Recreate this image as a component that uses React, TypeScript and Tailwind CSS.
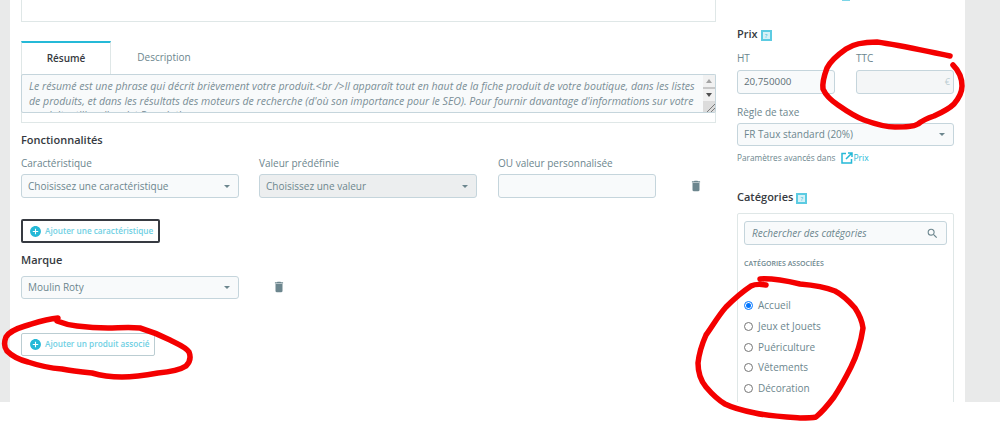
import React from 'react';

const font = "[font-family:'Open_Sans',sans-serif]";

const Select = ({ label, disabled, width, height = 'h-6' }: { label: string; disabled?: boolean; width: string; height?: string }) => (
  <div className={`${width} ${height} shrink-0 flex items-center justify-between pl-[6px] pr-[8px] border border-[#c5d5dc] rounded-[3px] text-[10px] text-[#6c868e] ${disabled ? 'bg-[#eceeef]' : 'bg-[#f8fafb]'}`}>
    <span>{label}</span>
    <span className="w-0 h-0 border-x-[3.5px] border-x-transparent border-t-[3.5px] border-t-[#6c868e]" />
  </div>
);

const Help = () => (
  <span className="mt-[3px] w-[11px] h-[11px] border-2 border-[#5ccbe2] bg-[#d5f1f7] flex items-center justify-center text-[6px] font-normal leading-none text-[#25b9d7]">?</span>
);

const AddButton = ({ label, focused }: { label: string; focused?: boolean }) => (
  <div className={`inline-flex items-center gap-[3px] rounded-[2px] font-semibold text-[8.2px] text-[#6fcfe3] bg-white ${focused ? 'h-6 pl-[6px] border-2 border-[#363a41] pr-[5px]' : 'h-[23px] pl-[7px] border border-[#bbcdd2] pr-[5px]'}`}>
    <svg width="13" height="13" viewBox="0 0 24 24" fill="#25b9d7">
      <path d="M12 2C6.48 2 2 6.48 2 12s4.48 10 10 10 10-4.48 10-10S17.52 2 12 2zm5 11h-4v4h-2v-4H7v-2h4V7h2v4h4v2z" />
    </svg>
    {label}
  </div>
);

const Trash = () => (
  <svg width="14" height="14" viewBox="0 0 24 24" fill="#6c868e">
    <path d="M6 19c0 1.1.9 2 2 2h8c1.1 0 2-.9 2-2V7H6v12zM19 4h-3.5l-1-1h-5l-1 1H5v2h14V4z" />
  </svg>
);

const Scribble = ({ d }: { d: string }) => (
  <path d={d} fill="none" stroke="#f40000" strokeWidth={5.5} strokeLinecap="round" strokeLinejoin="round" />
);

const categories = ['Accueil', 'Jeux et Jouets', 'Puériculture', 'Vêtements', 'Décoration'];

export default function App() {
  return (
    <div className={`relative h-[422px] w-[1000px] overflow-hidden bg-white ${font}`}>
      <div className="h-[402px] bg-[#e9eaea] pl-[10px] pr-[35px]">
        <div className="h-full bg-white flex pl-[11px] overflow-hidden">
          {/* colonne gauche */}
          <div className="w-[695px] shrink-0">
            <div className="h-[22px] border-x border-b border-[#dfe7e7]" />

            <div className="mt-[19px] flex h-[33px]">
              <div className="w-[90px] border-t-2 border-t-[#25b9d7] border-x border-x-[#dfe7e7] flex items-center justify-center text-[10px] text-[#363a41] font-semibold">
                Résumé
              </div>
              <div className="w-[106px] flex items-center justify-center text-[10px] text-[#6c868e]">Description</div>
            </div>

            <div className="h-[49px] border-x border-b border-[#dfe7e7]">
              <div className="relative h-[39px] -ml-px -mr-px bg-[#f8fafb] border border-[#c5d5dc] rounded-[2px] overflow-hidden pl-[7px] pr-[13px] pt-[4px] text-[10.55px] leading-[14.6px] italic text-[#7a8e96]">
                Le résumé est une phrase qui décrit brièvement votre produit.&lt;br /&gt;Il apparaît tout en haut de la fiche produit de votre boutique, dans les listes de produits, et dans les résultats des moteurs de recherche (d'où son importance pour le SEO). Pour fournir davantage d'informations sur votre produit, utilisez l'onglet Description.
                <div className="absolute right-0 top-0 bottom-0 w-[12px] bg-[#f1f1f1] flex flex-col items-center pt-[4px]">
                  <span className="w-0 h-0 border-x-[3px] border-x-transparent border-b-[4px] border-b-[#a3a3a3]" />
                  <span className="mt-[4px] h-[2px] w-full bg-[#c8c8c8]" />
                  <span className="mt-[4px] w-0 h-0 border-x-[3px] border-x-transparent border-t-[4px] border-t-[#505050]" />
                  <div className="absolute right-0 bottom-0 w-[12px] h-[11px] bg-[#dcdcdc]">
                    <svg className="absolute right-0 bottom-0" width="10" height="10" viewBox="0 0 10 10" stroke="#7a7a7a" strokeWidth="1">
                      <path d="M2 10 10 2M6 10 10 6" />
                    </svg>
                  </div>
                </div>
              </div>
            </div>

            <h3 className="mt-[8px] h-[18px] text-[11px] leading-[18px] font-semibold text-[#363a41]">Fonctionnalités</h3>

            <div className="mt-[7px] flex text-[10px] leading-[15px] text-[#6c868e]">
              <span className="w-[238px]">Caractéristique</span>
              <span className="w-[239px]">Valeur prédéfinie</span>
              <span>OU valeur personnalisée</span>
            </div>
            <div className="mt-[3px] flex items-center">
              <Select label="Choisissez une caractéristique" width="w-[218px]" />
              <div className="w-[20px]" />
              <Select label="Choisissez une valeur" disabled width="w-[218px]" />
              <div className="w-[21px]" />
              <div className="w-[158px] h-6 bg-[#f8fafb] border border-[#c5d5dc] rounded-[3px]" />
              <div className="ml-[33px]"><Trash /></div>
            </div>

            <div className="mt-[21px]"><AddButton label="Ajouter une caractéristique" focused /></div>

            <h3 className="mt-[7px] h-[18px] text-[11px] leading-[18px] font-semibold text-[#363a41]">Marque</h3>
            <div className="mt-[7px] flex items-center">
              <Select label="Moulin Roty" width="w-[218px]" height="h-[23px]" />
              <div className="ml-[33px]"><Trash /></div>
            </div>

            <div className="mt-[34px]"><AddButton label="Ajouter un produit associé" /></div>
          </div>

          {/* colonne droite */}
          <div className="ml-[21px] w-[217px] shrink-0 text-[#6c868e]">
            <div className="h-px ml-[105px] w-[8px] bg-[#7cd5e7]" />
            <div className="mt-[24px] flex items-center gap-[3px] text-[11px] leading-[18px] font-semibold text-[#363a41]">Prix <Help /></div>
            <div className="mt-[8px] flex text-[10px] leading-[15px]">
              <span className="w-[119px]">HT</span>
              <span>TTC</span>
            </div>
            <div className="mt-[4px] flex justify-between">
              <div className="w-[98px] h-6 bg-[#f8fafb] border border-[#c5d5dc] rounded-[3px] pl-[6px] flex items-center text-[9.8px] text-[#5d6f76]">20,750000</div>
              <div className="w-[98px] h-6 bg-[#f4f6f7] border border-[#c5d5dc] rounded-[3px] pr-[3px] flex items-center justify-end text-[9px] text-[#bbcdd2]">€</div>
            </div>
            <div className="mt-[11px] text-[10px] leading-[15px]">Règle de taxe</div>
            <div className="mt-[3px]"><Select label="FR Taux standard (20%)" width="w-[217px]" height="h-[23px]" /></div>
            <div className="mt-[6px] flex items-center text-[8.25px] leading-[12px]">
              Paramètres avancés dans
              <svg className="ml-[6px]" width="12" height="12" viewBox="0 0 12 12" fill="none" stroke="#25b9d7" strokeWidth="1.5">
                <path d="M5 1.5H1v9.5h9.5V7M7 1h4v4M11 1 5 7" />
              </svg>
              <span className="text-[8.5px] text-[#25b9d7]">Prix</span>
            </div>

            <div className="mt-[24px] flex items-center gap-[3px] text-[11px] leading-[18px] font-semibold text-[#363a41]">Catégories <Help /></div>
            <div className="mt-[7px] h-[200px] border border-[#dfe7e7] rounded-[2px] px-[6px] pt-[7px]">
              <div className="h-6 bg-[#f8fafb] border border-[#c5d5dc] rounded-[3px] flex items-center justify-between pl-[7px] pr-[7px] text-[10px] italic text-[#6c868e]">
                Rechercher des catégories
                <svg width="13" height="13" viewBox="0 0 24 24" fill="#6c868e">
                  <path d="M15.5 14h-.79l-.28-.27A6.47 6.47 0 0 0 16 9.5 6.5 6.5 0 1 0 9.5 16c1.61 0 3.09-.59 4.23-1.57l.27.28v.79l5 4.99L20.49 19l-4.99-5zm-6 0C7.01 14 5 11.99 5 9.5S7.01 5 9.5 5 14 7.01 14 9.5 11.99 14 9.5 14z" />
                </svg>
              </div>
              <div className="mt-[14px] text-[7px] leading-[10px] font-semibold uppercase">Catégories associées</div>
              <div className="mt-[29px] flex flex-col gap-[5.75px]">
                {categories.map((c, i) => (
                  <label key={c} className="flex items-center gap-[5px] h-[15px] text-[10px]">
                    <span className={`w-[9px] h-[9px] rounded-full border flex items-center justify-center bg-white ${i === 0 ? 'border-[#0075ff]' : 'border-[#767676]'}`}>
                      {i === 0 && <span className="w-[5px] h-[5px] rounded-full bg-[#0075ff]" />}
                    </span>
                    {c}
                  </label>
                ))}
              </div>
            </div>
          </div>
        </div>
      </div>

      {/* annotations rouges */}
      <svg className="absolute inset-0 pointer-events-none" width="1000" height="422">
        <Scribble d="M950 56 C925 51 900 45 877 42 C862 42 853 44 846 49 C836 56 830 62 827 68 C824 76 822 82 823 89 C826 96 832 101 838 105 C848 112 856 117 864 120 C875 124 885 127 895 127 C905 127 913 127 918 124 C923 120 928 118 934 116 C943 112 950 108 954 104 C959 98 962 92 962 86 C962 78 958 70 953 65" />
        <Scribble d="M58 318 C45 319 35 323 25 326 C15 329 9 332 6 337 C4 342 4 347 7 351 C12 356 20 360 28 362 C40 366 50 368 62 369 C72 371 82 372 92 373 C102 376 112 377 122 377 C135 377 147 375 158 373 C170 372 180 370 186 366 C190 362 191 357 189 352 C186 347 178 344 170 340 C160 335 150 331 140 328 C128 327 118 328 108 328 C95 328 85 327 77 326 C68 325 62 323 57 321" />
        <Scribble d="M766 285 C760 284 755 284 751 286 C742 292 733 300 726 307 C718 316 712 327 706 335 C702 344 699 354 698 363 C698 373 701 381 706 387 C712 394 718 400 725 404 C735 409 745 411 755 413 C768 416 785 417 800 418 C808 418 812 418 816 417 C822 412 828 405 834 397 C840 388 846 377 851 367 C857 355 861 342 863 328 C862 320 859 314 855 308 C848 300 843 295 835 291 C825 287 812 285 800 284 C787 281 772 278 760 279" />
      </svg>
    </div>
  );
}
